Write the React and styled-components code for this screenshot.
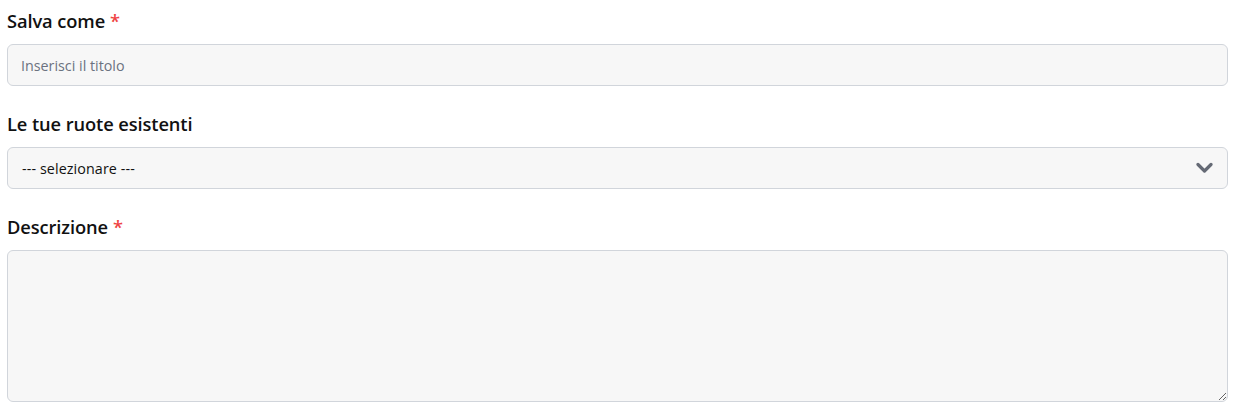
import React from "react";
import styled, { createGlobalStyle } from "styled-components";

const Global = createGlobalStyle`
  html, body { margin: 0; padding: 0; background: #ffffff; }
  body { font-family: "Open Sans", "Noto Sans", sans-serif; color: #111111; }
  * { box-sizing: border-box; }
`;

const Form = styled.form`
  display: flex;
  flex-direction: column;
  gap: 24px;
  padding: 7px 11px 0 7px;
`;

const Field = styled.div`
  display: flex;
  flex-direction: column;
  gap: 10px;
`;

const Label = styled.label`
  font-family: "Open Sans", "Noto Sans", sans-serif;
  font-size: 18.3px;
  font-weight: 600;
  line-height: 27px;
  color: #111111;
  letter-spacing: -0.1px;
`;

const Required = styled.span`
  color: #ef4444;
  margin-left: 5px;
`;

const controlBase = `
  width: 100%;
  background: #f7f7f7;
  border: 1px solid #d1d5db;
  border-radius: 6px;
  font-family: "Open Sans", "Noto Sans", sans-serif;
  font-size: 14.3px;
  color: #111111;
  outline: none;
`;

const Input = styled.input`
  ${controlBase}
  height: 42px;
  padding: 0 13px;
  &::placeholder { color: #6b7280; opacity: 1; }
`;

const SelectWrap = styled.div`
  position: relative;
`;

const Select = styled.select`
  ${controlBase}
  height: 42px;
  padding: 0 40px 0 14px;
  appearance: none;
  -webkit-appearance: none;
  letter-spacing: 0.1px;
`;

const Chevron = styled.svg`
  position: absolute;
  right: 15px;
  top: 50%;
  transform: translateY(-50%);
  width: 17px;
  height: 12px;
  pointer-events: none;
`;

const TextArea = styled.textarea`
  ${controlBase}
  height: 152px;
  padding: 10px 13px;
  resize: vertical;
`;

export default function App() {
  return (
    <>
      <Global />
      <Form onSubmit={(e) => e.preventDefault()}>
        <Field>
          <Label htmlFor="title">
            Salva come<Required>*</Required>
          </Label>
          <Input id="title" type="text" placeholder="Inserisci il titolo" />
        </Field>
        <Field>
          <Label htmlFor="wheels">Le tue ruote esistenti</Label>
          <SelectWrap>
            <Select id="wheels" defaultValue="">
              <option value="">--- selezionare ---</option>
            </Select>
            <Chevron viewBox="0 0 17 12" aria-hidden="true">
              <path d="M2 2.5 L8.5 9 L15 2.5" fill="none" stroke="#656a75" strokeWidth="3.2" strokeLinecap="round" strokeLinejoin="round" />
            </Chevron>
          </SelectWrap>
        </Field>
        <Field>
          <Label htmlFor="desc">
            Descrizione<Required>*</Required>
          </Label>
          <TextArea id="desc" />
        </Field>
      </Form>
    </>
  );
}
